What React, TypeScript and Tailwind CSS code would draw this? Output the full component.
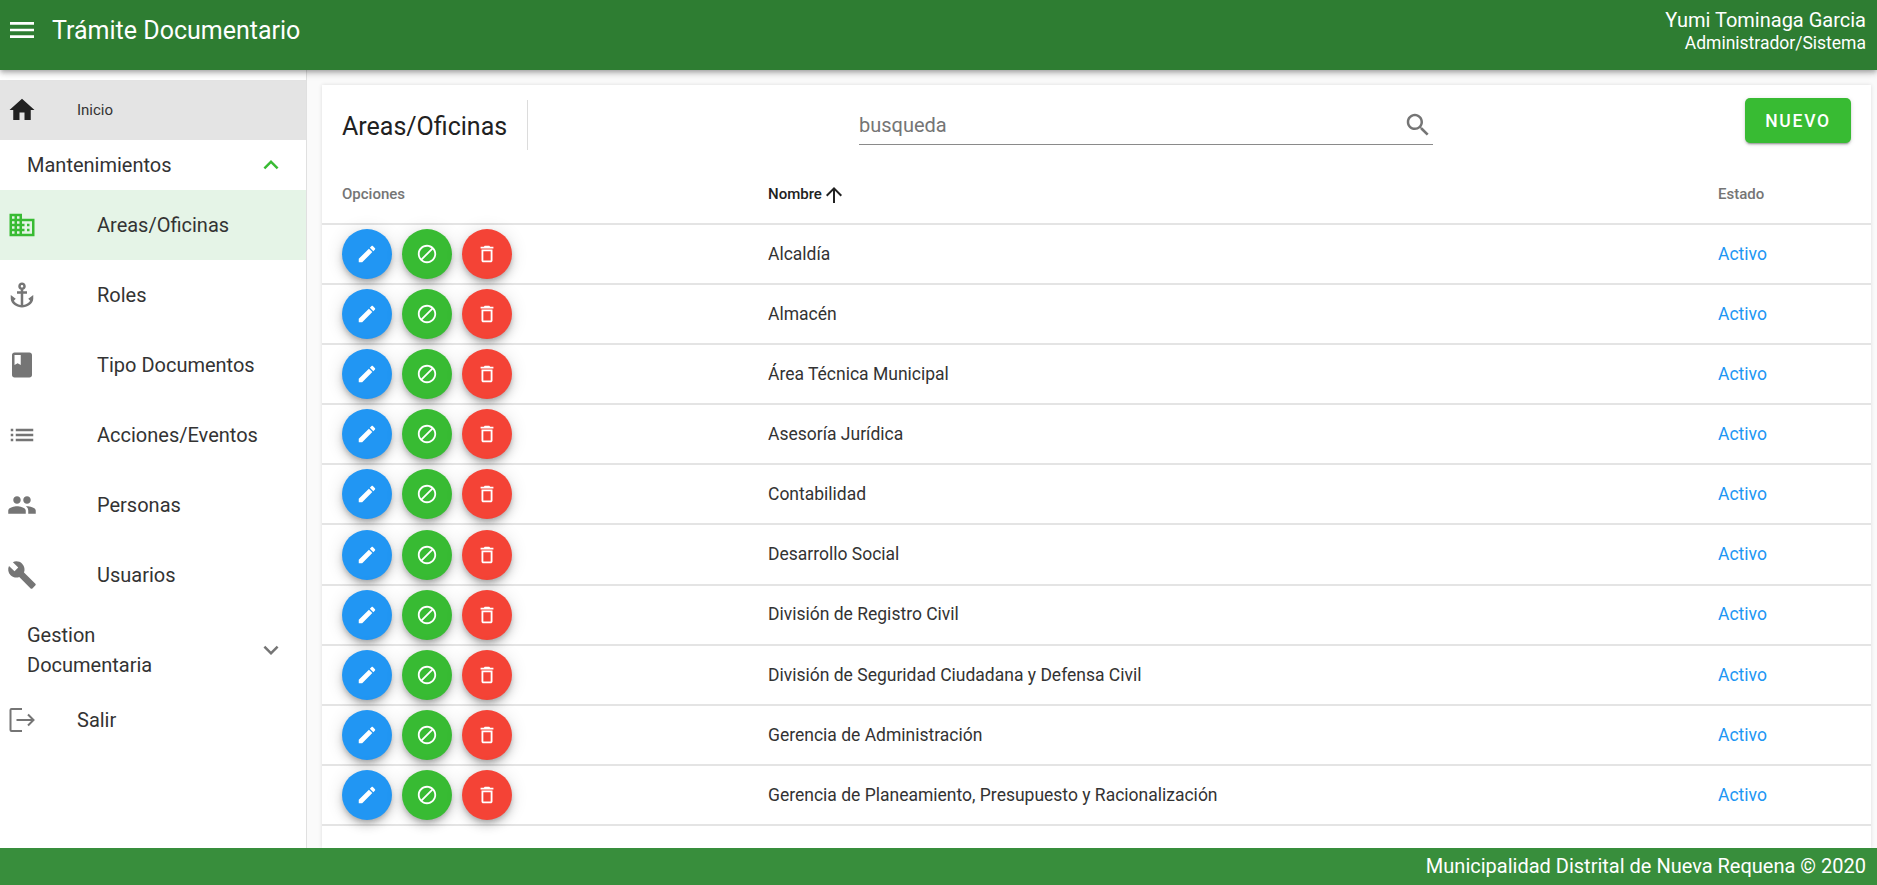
const paths = {
  menu: "M3 18h18v-2H3v2zm0-5h18v-2H3v2zm0-7v2h18V6H3z",
  home: "M10 20v-6h4v6h5v-8h3L12 3 2 12h3v8z",
  less: "M12 8l-6 6 1.41 1.41L12 10.83l4.59 4.58L18 14z",
  more: "M16.59 8.59L12 13.17 7.41 8.59 6 10l6 6 6-6z",
  domain: "M12 7V3H2v18h20V7H12zM6 19H4v-2h2v2zm0-4H4v-2h2v2zm0-4H4V9h2v2zm0-4H4V5h2v2zm4 12H8v-2h2v2zm0-4H8v-2h2v2zm0-4H8V9h2v2zm0-4H8V5h2v2zm10 12h-8v-2h2v-2h-2v-2h2v-2h-2V9h8v10zm-2-8h-2v2h2v-2zm0 4h-2v2h2v-2z",
  anchor: "M17 15l1.55 1.55c-.96 1.69-3.33 3.04-5.55 3.37V11h3V9h-3V7.82C14.16 7.4 15 6.3 15 5c0-1.65-1.35-3-3-3S9 3.35 9 5c0 1.3.84 2.4 2 2.82V9H8v2h3v8.92c-2.22-.33-4.59-1.68-5.55-3.37L7 15l-4-3v3c0 3.88 4.92 7 9 7s9-3.12 9-7v-3l-4 3zM12 4c.55 0 1 .45 1 1s-.45 1-1 1-1-.45-1-1 .45-1 1-1z",
  book: "M18 2H6c-1.1 0-2 .9-2 2v16c0 1.1.9 2 2 2h12c1.1 0 2-.9 2-2V4c0-1.1-.9-2-2-2zM6 4h5v8l-2.5-1.5L6 12V4z",
  list: "M3 13h2v-2H3v2zm0 4h2v-2H3v2zm0-8h2V7H3v2zm4 4h14v-2H7v2zm0 4h14v-2H7v2zM7 7v2h14V7H7z",
  people: "M16 11c1.66 0 2.99-1.34 2.99-3S17.66 5 16 5c-1.66 0-3 1.34-3 3s1.34 3 3 3zm-8 0c1.66 0 2.99-1.34 2.99-3S9.66 5 8 5C6.34 5 5 6.34 5 8s1.34 3 3 3zm0 2c-2.33 0-7 1.17-7 3.5V19h14v-2.5c0-2.33-4.67-3.5-7-3.5zm8 0c-.29 0-.62.02-.97.05 1.16.84 1.97 1.97 1.97 3.45V19h6v-2.5c0-2.33-4.67-3.5-7-3.5z",
  build: "M22.7 19l-9.1-9.1c.9-2.3.4-5-1.5-6.9-2-2-5-2.4-7.4-1.3L9 6 6 9 1.6 4.7C.4 7.1.9 10.1 2.9 12.1c1.9 1.9 4.6 2.4 6.9 1.5l9.1 9.1c.4.4 1 .4 1.4 0l2.3-2.3c.5-.4.5-1.1.1-1.4z",
  search: "M15.5 14h-.79l-.28-.27C15.41 12.59 16 11.11 16 9.5 16 5.91 13.09 3 9.5 3S3 5.91 3 9.5 5.91 16 9.5 16c1.61 0 3.09-.59 4.23-1.57l.27.28v.79l5 4.99L20.49 19l-4.99-5zm-6 0C7.01 14 5 11.99 5 9.5S7.01 5 9.5 5 14 7.01 14 9.5 11.99 14 9.5 14z",
  up: "M4 12l1.41 1.41L11 7.83V20h2V7.83l5.58 5.59L20 12l-8-8-8 8z",
  edit: "M3 17.25V21h3.75L17.81 9.94l-3.75-3.75L3 17.25zM20.71 7.04c.39-.39.39-1.02 0-1.41l-2.34-2.34c-.39-.39-1.02-.39-1.41 0l-1.83 1.83 3.75 3.75 1.83-1.83z",
  block: "M12 2C6.48 2 2 6.48 2 12s4.48 10 10 10 10-4.48 10-10S17.52 2 12 2zM4 12c0-4.42 3.58-8 8-8 1.85 0 3.55.63 4.9 1.69L5.69 16.9C4.63 15.55 4 13.85 4 12zm8 8c-1.85 0-3.55-.63-4.9-1.69L18.31 7.1C19.37 8.45 20 10.15 20 12c0 4.42-3.58 8-8 8z",
  trash: "M6 19c0 1.1.9 2 2 2h8c1.1 0 2-.9 2-2V7H6v12zM8 9h8v10H8V9zm7.5-5l-1-1h-5l-1 1H5v2h14V4h-3.5z",
};

function Icon({ d, className }: { d: string; className: string }) {
  return (
    <svg viewBox="0 0 24 24" fill="currentColor" className={className}>
      <path d={d} />
    </svg>
  );
}

const items = [
  { label: "Areas/Oficinas", icon: paths.domain, active: true },
  { label: "Roles", icon: paths.anchor },
  { label: "Tipo Documentos", icon: paths.book },
  { label: "Acciones/Eventos", icon: paths.list },
  { label: "Personas", icon: paths.people },
  { label: "Usuarios", icon: paths.build },
];

const areas = [
  "Alcaldía",
  "Almacén",
  "Área Técnica Municipal",
  "Asesoría Jurídica",
  "Contabilidad",
  "Desarrollo Social",
  "División de Registro Civil",
  "División de Seguridad Ciudadana y Defensa Civil",
  "Gerencia de Administración",
  "Gerencia de Planeamiento, Presupuesto y Racionalización",
];

function Sidebar() {
  return (
    <aside className="w-[307px] shrink-0 bg-white border-r border-[#e0e0e0] pt-[10px]">
      <div className="h-[60px] bg-[#e4e4e4] flex items-center">
        <Icon d={paths.home} className="w-[30px] h-[30px] ml-[7px] text-[#212121]" />
        <span className="ml-[40px] text-[15px] text-[#333]">Inicio</span>
      </div>
      <div className="h-[50px] flex items-center justify-between pl-[27px] pr-[20px] text-[20px] text-[#333]">
        <span>Mantenimientos</span>
        <Icon d={paths.less} className="w-[30px] h-[30px] text-[#38bb33]" />
      </div>
      {items.map((item) => (
        <div
          key={item.label}
          className={"h-[70px] flex items-center " + (item.active ? "bg-[#e5f4e7]" : "")}
        >
          <Icon
            d={item.icon}
            className={"w-[30px] h-[30px] ml-[7px] " + (item.active ? "text-[#38bb33]" : "text-[#757575]")}
          />
          <span className="ml-[60px] text-[20px] text-[#333]">{item.label}</span>
        </div>
      ))}
      <div className="h-[80px] flex items-center justify-between pl-[27px] pr-[20px] text-[20px] leading-[30px] text-[#333]">
        <span className="w-[150px]">Gestion Documentaria</span>
        <Icon d={paths.more} className="w-[30px] h-[30px] text-[#757575]" />
      </div>
      <div className="h-[60px] flex items-center">
        <svg viewBox="0 0 30 30" fill="none" stroke="#757575" strokeWidth="2" className="w-[30px] h-[30px] ml-[7px]">
          <path d="M15 4H4.5a1 1 0 0 0-1 1v20a1 1 0 0 0 1 1H15M9.5 15H26M21 9.5l5.5 5.5-5.5 5.5" />
        </svg>
        <span className="ml-[40px] text-[20px] text-[#333]">Salir</span>
      </div>
    </aside>
  );
}

function RowButton({ d, color }: { d: string; color: string }) {
  return (
    <button
      className={
        "w-[50px] h-[50px] rounded-full flex items-center justify-center text-white shadow-[0_3px_5px_-1px_rgba(0,0,0,0.2),0_6px_10px_0_rgba(0,0,0,0.14),0_1px_18px_0_rgba(0,0,0,0.12)] " +
        color
      }
    >
      <Icon d={d} className="w-[22px] h-[22px]" />
    </button>
  );
}

export default function App() {
  return (
    <div
      className="h-screen flex flex-col overflow-hidden bg-[#fafafa]"
      style={{ fontFamily: "Roboto, sans-serif" }}
    >
      <header className="relative z-10 h-[70px] shrink-0 bg-[#2e7d32] text-white flex justify-between shadow-[0_2px_4px_-1px_rgba(0,0,0,0.2),0_4px_5px_0_rgba(0,0,0,0.14),0_1px_10px_0_rgba(0,0,0,0.12)]">
        <div className="flex items-center h-[60px] pl-[6px]">
          <Icon d={paths.menu} className="w-[32px] h-[32px]" />
          <span className="ml-[14px] text-[25px] leading-none">Trámite Documentario</span>
        </div>
        <div className="text-right pr-[11px] pt-[8px]">
          <div className="text-[20px] leading-[24px]">Yumi Tominaga Garcia</div>
          <div className="text-[17.5px] leading-[22px]">Administrador/Sistema</div>
        </div>
      </header>

      <div className="flex-1 flex min-h-0">
        <Sidebar />
        <main className="flex-1 min-w-0 pl-[15px] pr-[6px] pt-[15px]">
          <div className="bg-white h-full shadow-[0_0_4px_rgba(0,0,0,0.12)]">
            <div className="h-[84px] flex items-start pl-[20px] pr-[20px]">
              <div className="mt-[15px] w-[186px] h-[50px] border-r border-[#dcdcdc] flex items-center pt-[4px]">
                <span className="text-[25px] text-[#212121]">Areas/Oficinas</span>
              </div>
              <div className="mt-[10px] ml-[331px] w-[574px] h-[50px] pt-[10px] border-b border-[#8a8a8a] flex items-center justify-between">
                <span className="text-[20px] text-[#757575]">busqueda</span>
                <Icon d={paths.search} className="w-[30px] h-[30px] text-[#757575]" />
              </div>
              <button className="mt-[13px] ml-auto w-[106px] h-[45px] pt-[1px] rounded-[5px] bg-[#38bb33] text-white text-[17.5px] font-medium tracking-[1.75px] shadow-[0_3px_1px_-2px_rgba(0,0,0,0.2),0_2px_2px_0_rgba(0,0,0,0.14),0_1px_5px_0_rgba(0,0,0,0.12)]">
                NUEVO
              </button>
            </div>
            <div className="h-[56px] flex items-center pb-[3px] border-b-2 border-[#e4e4e4] text-[15px] font-medium">
              <div className="w-[446px] pl-[20px] text-[#757575]">Opciones</div>
              <div className="w-[950px] flex items-center text-[#212121]">
                Nombre
                <Icon d={paths.up} className="w-[24px] h-[24px]" />
              </div>
              <div className="text-[#757575]">Estado</div>
            </div>
            {areas.map((name) => (
              <div key={name} className="h-[60.1px] flex items-center border-b-2 border-[#e4e4e4] text-[17.5px]">
                <div className="w-[446px] pl-[20px] flex gap-[10px]">
                  <RowButton d={paths.edit} color="bg-[#2196f3]" />
                  <RowButton d={paths.block} color="bg-[#38bb33]" />
                  <RowButton d={paths.trash} color="bg-[#f44336]" />
                </div>
                <div className="w-[950px] text-[#333]">{name}</div>
                <div className="text-[#2196f3]">Activo</div>
              </div>
            ))}
          </div>
        </main>
      </div>

      <footer className="relative z-10 h-[37px] shrink-0 bg-[#388e3c] text-white text-right text-[20px] leading-[37px] pr-[11px]">
        Municipalidad Distrital de Nueva Requena © 2020
      </footer>
    </div>
  );
}
